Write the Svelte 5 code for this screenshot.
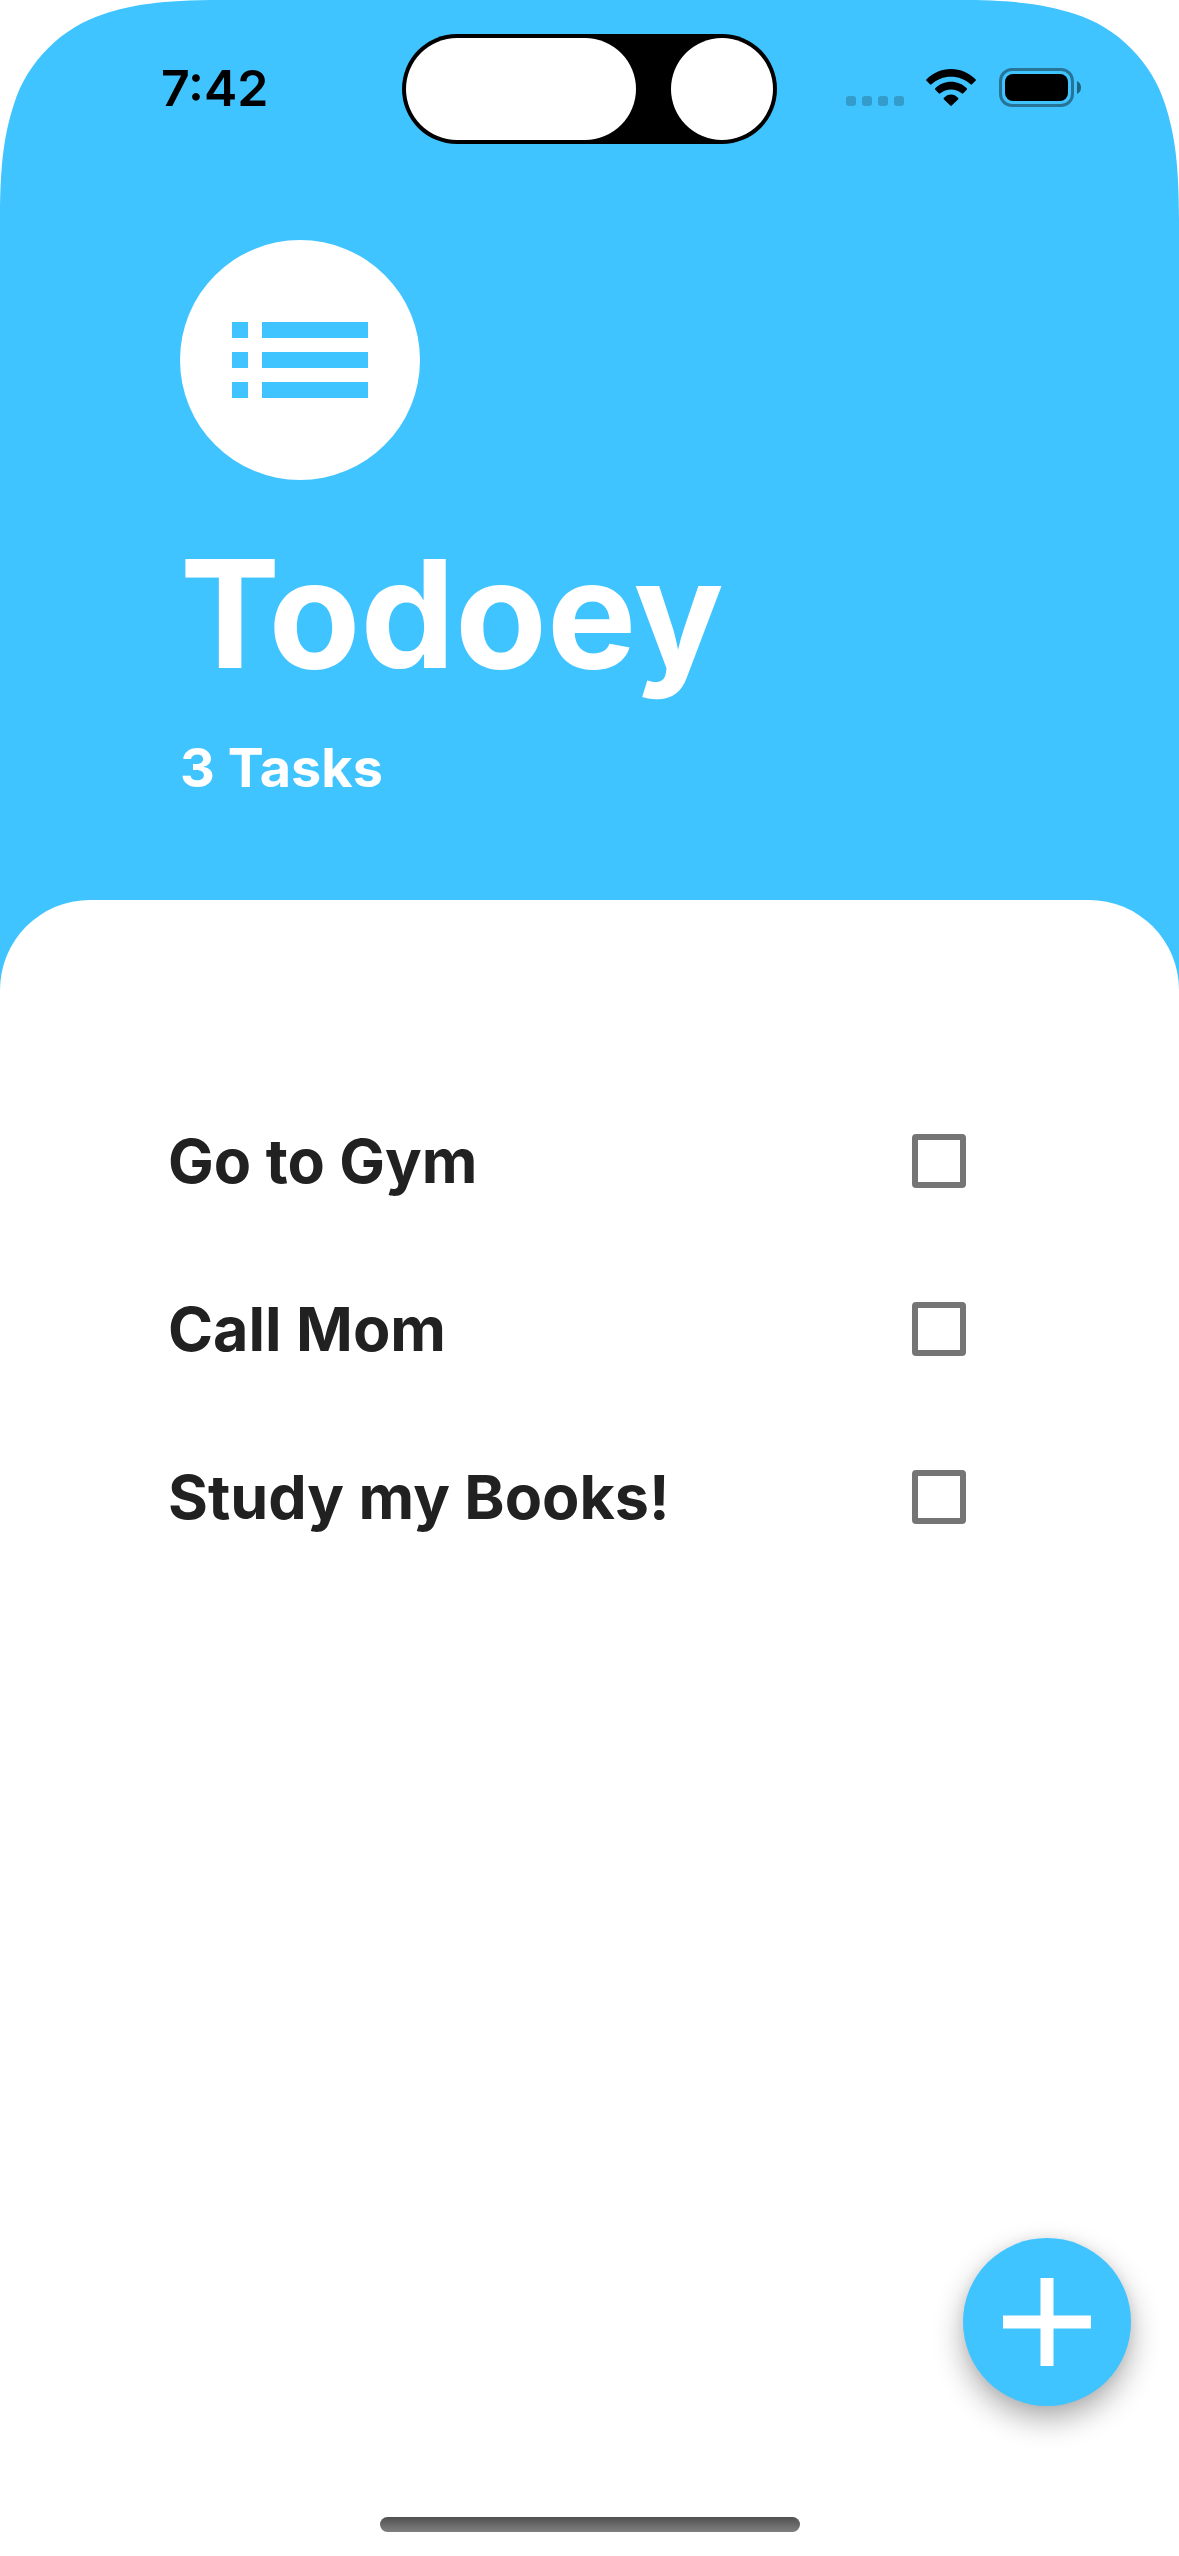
<script>
  let tasks = $state([
    { id: 1, name: 'Go to Gym', done: false },
    { id: 2, name: 'Call Mom', done: false },
    { id: 3, name: 'Study my Books!', done: false }
  ]);
</script>

{#snippet corner(side)}
  <svg class="corner {side}" viewBox="0 0 220 220" aria-hidden="true">
    <path d="M0 0H220C160 0 132 5 104 14C62 27 27 62 14 104C5 132 0 160 0 220Z" />
  </svg>
{/snippet}

<div class="screen">
  {@render corner('left')}
  {@render corner('right')}

  <header>
    <div class="status">
      <time>7:42</time>
      <div class="island">
        <span class="pill"></span>
        <span class="lens"></span>
      </div>
      <div class="indicators">
        <svg class="signal" viewBox="0 0 58 10" role="img" aria-label="No signal">
          <rect x="0" width="10" height="10" rx="3" />
          <rect x="16" width="10" height="10" rx="3" />
          <rect x="32" width="10" height="10" rx="3" />
          <rect x="48" width="10" height="10" rx="3" />
        </svg>
        <svg class="wifi" viewBox="0 0 50 37" role="img" aria-label="Wi-Fi">
          <path d="M.5 10.2C7 4 15.500 0 25 0S43 4 49.500 10.200Q50.300 11 49.500 11.800L46 15.300Q45.300 16 44.500 15.300C39 10.300 32.500 7.700 25 7.700S11 10.300 5.500 15.300Q4.700 16 4 15.300L.5 11.800Q-.3 11 .5 10.200Z" />
          <path d="M9.300 19.200C13.500 15.200 19 12.800 25 12.800S36.500 15.200 40.700 19.200Q41.500 20 40.700 20.800L37.300 24.300Q36.500 25 35.700 24.300C32.700 21.800 29 20.400 25 20.400S17.300 21.800 14.300 24.300Q13.500 25 12.700 24.300L9.300 20.800Q8.500 20 9.300 19.200Z" />
          <path d="M18 28.800C20 26.700 22.300 25.500 25 25.500S30 26.700 32 28.800Q32.900 29.600 32 30.400L25.700 36.600Q25 37.200 24.300 36.600L18 30.400Q17.100 29.600 18 28.800Z" />
        </svg>
        <svg class="battery" viewBox="0 0 82 39" role="img" aria-label="Battery full">
          <rect class="shell" x="1.500" y="1.500" width="72" height="36" rx="11.500" />
          <rect x="6" y="6" width="63" height="27" rx="8" />
          <path class="nub" d="M78 13Q82 15 82 19.500T78 26Z" />
        </svg>
      </div>
    </div>

    <div class="intro">
      <div class="badge">
        <svg viewBox="0 0 136 76" aria-hidden="true">
          <path d="M0 0h16v16H0zM30 0h106v16H30zM0 30h16v16H0zM30 30h106v16H30zM0 60h16v16H0zM30 60h106v16H30z" />
        </svg>
      </div>
      <h1>Todoey</h1>
      <p>{tasks.length} Tasks</p>
    </div>
  </header>

  <main>
    <ul>
      {#each tasks as task (task.id)}
        <li>
          <label for="task-{task.id}">{task.name}</label>
          <input id="task-{task.id}" type="checkbox" bind:checked={task.done} />
        </li>
      {/each}
    </ul>
    <div class="home"></div>
  </main>

  <button class="add" type="button" aria-label="Add task">
    <svg viewBox="0 0 88 88" aria-hidden="true">
      <path d="M37.500 0h13v37.500H88v13H50.500V88h-13V50.500H0v-13h37.500z" />
    </svg>
  </button>
</div>

<style>
  .screen {
    position: relative;
    display: flex;
    flex-direction: column;
    min-height: 100vh;
    background: #40c4ff;
    font-family: Inter, "Liberation Sans", sans-serif;
  }

  .corner {
    position: absolute;
    top: 0;
    width: 220px;
    height: 220px;
    fill: #fff;
  }

  .left {
    left: 0;
  }

  .right {
    right: 0;
    transform: scaleX(-1);
  }

  header {
    position: relative;
    padding-top: 34px;
  }

  .status {
    display: grid;
    grid-template-columns: 1fr auto 1fr;
    align-items: center;
  }

  time {
    padding-left: 161px;
    padding-bottom: 2px;
    font-size: 50px;
    line-height: 60px;
    font-weight: 600;
    color: #000;
  }

  .island {
    display: flex;
    justify-content: space-between;
    box-sizing: border-box;
    width: 375px;
    height: 110px;
    padding: 4px;
    border-radius: 55px;
    background: #000;
  }

  .pill,
  .lens {
    border-radius: 51px;
    background: #fff;
  }

  .pill {
    width: 230px;
  }

  .lens {
    width: 102px;
  }

  .indicators {
    display: flex;
    justify-content: flex-end;
    align-items: flex-end;
    padding-right: 98px;
    padding-bottom: 4px;
  }

  .signal {
    width: 58px;
    height: 10px;
    margin-right: 22px;
    margin-bottom: 1px;
    opacity: 0.2;
  }

  .wifi {
    width: 50px;
    height: 37px;
    margin-right: 23px;
    margin-bottom: 1px;
  }

  .battery {
    width: 82px;
    height: 39px;
  }

  .shell {
    fill: none;
    stroke: #000;
    stroke-width: 3;
    opacity: 0.4;
  }

  .nub {
    opacity: 0.5;
  }

  .intro {
    padding: 96px 180px 100px;
    color: #fff;
  }

  .badge {
    display: flex;
    align-items: center;
    justify-content: center;
    width: 240px;
    height: 240px;
    border-radius: 50%;
    background: #fff;
  }

  .badge svg {
    width: 136px;
    height: 76px;
    fill: #40c4ff;
  }

  h1 {
    margin: 46px 0 0;
    font-size: 150px;
    line-height: 176px;
    font-weight: 700;
  }

  p {
    margin: 34px 0 0;
    font-size: 54px;
    line-height: 64px;
    font-weight: 700;
  }

  main {
    display: flex;
    flex: 1;
    flex-direction: column;
    justify-content: space-between;
    align-items: center;
    padding: 177px 0 24px;
    border-radius: 90px 90px 0 0;
    background: #fff;
  }

  ul {
    align-self: stretch;
    margin: 0;
    padding: 0 213px 0 168px;
    list-style: none;
  }

  li {
    display: flex;
    align-items: center;
    justify-content: space-between;
    height: 168px;
  }

  label {
    font-size: 61px;
    line-height: 72px;
    font-weight: 650;
    color: #212121;
  }

  input {
    appearance: none;
    width: 54px;
    height: 54px;
    margin: 0;
    border: 6px solid #757575;
    border-radius: 4px;
    background: #fff;
  }

  input:checked {
    background: #757575;
  }

  .home {
    width: 420px;
    height: 15px;
    border-radius: 8px;
    background: linear-gradient(#505050, #808080);
  }

  .add {
    position: absolute;
    right: 48px;
    bottom: 150px;
    display: flex;
    align-items: center;
    justify-content: center;
    width: 168px;
    height: 168px;
    padding: 0;
    border: 0;
    border-radius: 50%;
    background: #40c4ff;
    box-shadow:
      0 13px 30px rgba(0, 0, 0, 0.32),
      0 0 12px rgba(0, 0, 0, 0.06);
  }

  .add svg {
    width: 88px;
    height: 88px;
    fill: #fff;
  }
</style>
